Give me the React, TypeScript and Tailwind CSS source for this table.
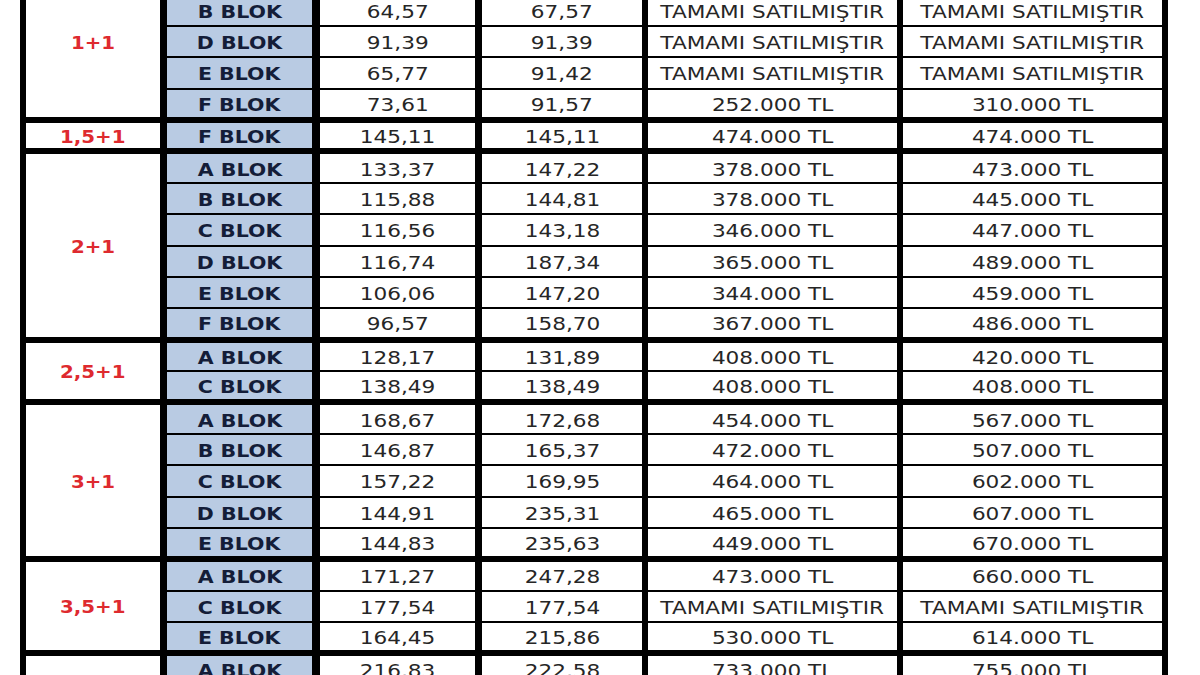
import React from "react";

type Row = { blok: string; a: string; b: string; c: string; d: string; hidden?: boolean };
type Group = { label: string; rows: Row[] };

const T = "TAMAMI SATILMIŞTIR";

const groups: Group[] = [
  {
    label: "1+1",
    rows: [
      { blok: "", a: "", b: "", c: "", d: "", hidden: true },
      { blok: "B BLOK", a: "64,57", b: "67,57", c: T, d: T },
      { blok: "D BLOK", a: "91,39", b: "91,39", c: T, d: T },
      { blok: "E BLOK", a: "65,77", b: "91,42", c: T, d: T },
      { blok: "F BLOK", a: "73,61", b: "91,57", c: "252.000 TL", d: "310.000 TL" },
    ],
  },
  {
    label: "1,5+1",
    rows: [{ blok: "F BLOK", a: "145,11", b: "145,11", c: "474.000 TL", d: "474.000 TL" }],
  },
  {
    label: "2+1",
    rows: [
      { blok: "A BLOK", a: "133,37", b: "147,22", c: "378.000 TL", d: "473.000 TL" },
      { blok: "B BLOK", a: "115,88", b: "144,81", c: "378.000 TL", d: "445.000 TL" },
      { blok: "C BLOK", a: "116,56", b: "143,18", c: "346.000 TL", d: "447.000 TL" },
      { blok: "D BLOK", a: "116,74", b: "187,34", c: "365.000 TL", d: "489.000 TL" },
      { blok: "E BLOK", a: "106,06", b: "147,20", c: "344.000 TL", d: "459.000 TL" },
      { blok: "F BLOK", a: "96,57", b: "158,70", c: "367.000 TL", d: "486.000 TL" },
    ],
  },
  {
    label: "2,5+1",
    rows: [
      { blok: "A BLOK", a: "128,17", b: "131,89", c: "408.000 TL", d: "420.000 TL" },
      { blok: "C BLOK", a: "138,49", b: "138,49", c: "408.000 TL", d: "408.000 TL" },
    ],
  },
  {
    label: "3+1",
    rows: [
      { blok: "A BLOK", a: "168,67", b: "172,68", c: "454.000 TL", d: "567.000 TL" },
      { blok: "B BLOK", a: "146,87", b: "165,37", c: "472.000 TL", d: "507.000 TL" },
      { blok: "C BLOK", a: "157,22", b: "169,95", c: "464.000 TL", d: "602.000 TL" },
      { blok: "D BLOK", a: "144,91", b: "235,31", c: "465.000 TL", d: "607.000 TL" },
      { blok: "E BLOK", a: "144,83", b: "235,63", c: "449.000 TL", d: "670.000 TL" },
    ],
  },
  {
    label: "3,5+1",
    rows: [
      { blok: "A BLOK", a: "171,27", b: "247,28", c: "473.000 TL", d: "660.000 TL" },
      { blok: "C BLOK", a: "177,54", b: "177,54", c: T, d: T },
      { blok: "E BLOK", a: "164,45", b: "215,86", c: "530.000 TL", d: "614.000 TL" },
    ],
  },
  {
    label: "",
    rows: [{ blok: "A BLOK", a: "216,83", b: "222,58", c: "733.000 TL", d: "755.000 TL" }],
  },
];

function Txt({ children }: { children: React.ReactNode }) {
  return (
    <span className="inline-block whitespace-nowrap scale-x-[1.2] text-[18px] leading-none text-[#262626]">
      {children}
    </span>
  );
}

function DataRow({ row, first, last }: { row: Row; first: boolean; last: boolean }) {
  const pad = `${first ? "pt-[3px]" : "pt-[1px]"} ${last ? "pb-[3px]" : "pb-[1px]"}`;
  return (
    <div className={`flex h-[31.375px] ${pad}`}>
      <div className="w-[145px] pt-[3px] bg-[#b9cbe3] flex items-center justify-center">
        <span className="inline-block whitespace-nowrap scale-x-[1.14] text-[18px] leading-none font-bold text-[#141d38]">
          {row.blok}
        </span>
      </div>
      <div className="ml-[8px] w-[155px] pt-[3px] bg-white flex items-center justify-center">
        <Txt>{row.a}</Txt>
      </div>
      <div className="ml-[7px] w-[160px] pt-[3px] bg-white flex items-center justify-center">
        <Txt>{row.b}</Txt>
      </div>
      <div className="ml-[6px] w-[249px] pt-[3px] bg-white flex items-center justify-center">
        <Txt>{row.c}</Txt>
      </div>
      <div className="ml-[6px] w-[259px] pt-[3px] bg-white flex items-center justify-center">
        <Txt>{row.d}</Txt>
      </div>
    </div>
  );
}

export default function App() {
  return (
    <div className="w-[1200px] h-[675px] overflow-hidden bg-white font-['DejaVu_Sans','Verdana',sans-serif]">
      <div className="ml-[20px] -mt-[36.875px] w-[1148px] bg-black px-[6px]">
        {groups.map((g, gi) => (
          <div key={gi} className="flex">
            <div className="w-[134px] my-[3px] pt-[2px] bg-white flex items-center justify-center">
              <span className="inline-block whitespace-nowrap scale-x-[1.1] text-[18px] leading-none font-bold text-[#de2a2f]">
                {g.label}
              </span>
            </div>
            <div className="ml-[7px] flex flex-col">
              {g.rows.map((r, ri) => (
                <DataRow key={ri} row={r} first={ri === 0} last={ri === g.rows.length - 1} />
              ))}
            </div>
          </div>
        ))}
      </div>
    </div>
  );
}
